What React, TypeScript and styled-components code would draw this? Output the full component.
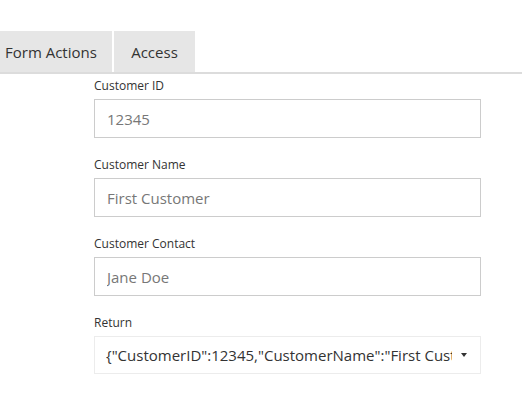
import React from "react";
import styled, { createGlobalStyle } from "styled-components";

const GlobalStyle = createGlobalStyle`
  html, body {
    margin: 0;
    padding: 0;
    background: #fff;
    font-family: "Open Sans", "Liberation Sans", sans-serif;
    color: #333;
  }
`;

const Page = styled.div`
  padding-top: 31px;
`;

const TabBar = styled.div`
  display: flex;
  gap: 2px;
  width: 522px;
  border-bottom: 2px solid #dcdcdc;
`;

const Tab = styled.div<{ $width: number; $align?: "left" | "center" }>`
  box-sizing: border-box;
  width: ${(p) => p.$width}px;
  height: 41px;
  display: flex;
  align-items: center;
  justify-content: ${(p) => (p.$align === "left" ? "flex-start" : "center")};
  padding-left: ${(p) => (p.$align === "left" ? "5px" : "0")};
  background: #e6e6e6;
  font-size: 15px;
  color: #333;
  white-space: nowrap;
`;

const Form = styled.form`
  display: flex;
  flex-direction: column;
  gap: 18px;
  padding: 3px 0 0 94px;
  width: 387px;
`;

const Field = styled.div`
  display: flex;
  flex-direction: column;
`;

const Label = styled.label`
  font-size: 12px;
  line-height: 18px;
  color: #333;
  margin-bottom: 4px;
`;

const Input = styled.input`
  box-sizing: border-box;
  height: 39px;
  width: 100%;
  margin: 0;
  padding: 0 12px;
  border: 1px solid #cccccc;
  border-radius: 0;
  font-family: inherit;
  font-size: 15px;
  color: #777;
  outline: none;
`;

const Select = styled.div`
  box-sizing: border-box;
  height: 38px;
  display: flex;
  align-items: center;
  padding: 0 13px 0 11px;
  border: 1px solid #ececec;
  font-size: 15px;
  color: #333;
`;

const SelectValue = styled.span`
  flex: 1;
  overflow: hidden;
  white-space: nowrap;
`;

const Caret = styled.span`
  margin-left: 9px;
  width: 0;
  height: 0;
  border-left: 3.5px solid transparent;
  border-right: 3.5px solid transparent;
  border-top: 4px solid #333;
`;

const fields = [
  { label: "Customer ID", value: "12345" },
  { label: "Customer Name", value: "First Customer" },
  { label: "Customer Contact", value: "Jane Doe" },
];

export default function App() {
  return (
    <Page>
      <GlobalStyle />
      <TabBar>
        <Tab $width={112} $align="left">Form Actions</Tab>
        <Tab $width={81}>Access</Tab>
      </TabBar>
      <Form>
        {fields.map((f) => (
          <Field key={f.label}>
            <Label>{f.label}</Label>
            <Input defaultValue={f.value} readOnly />
          </Field>
        ))}
        <Field>
          <Label>Return</Label>
          <Select>
            <SelectValue>
              {'{"CustomerID":12345,"CustomerName":"First Customer","CustomerContact":"Jane Doe"}'}
            </SelectValue>
            <Caret />
          </Select>
        </Field>
      </Form>
    </Page>
  );
}
